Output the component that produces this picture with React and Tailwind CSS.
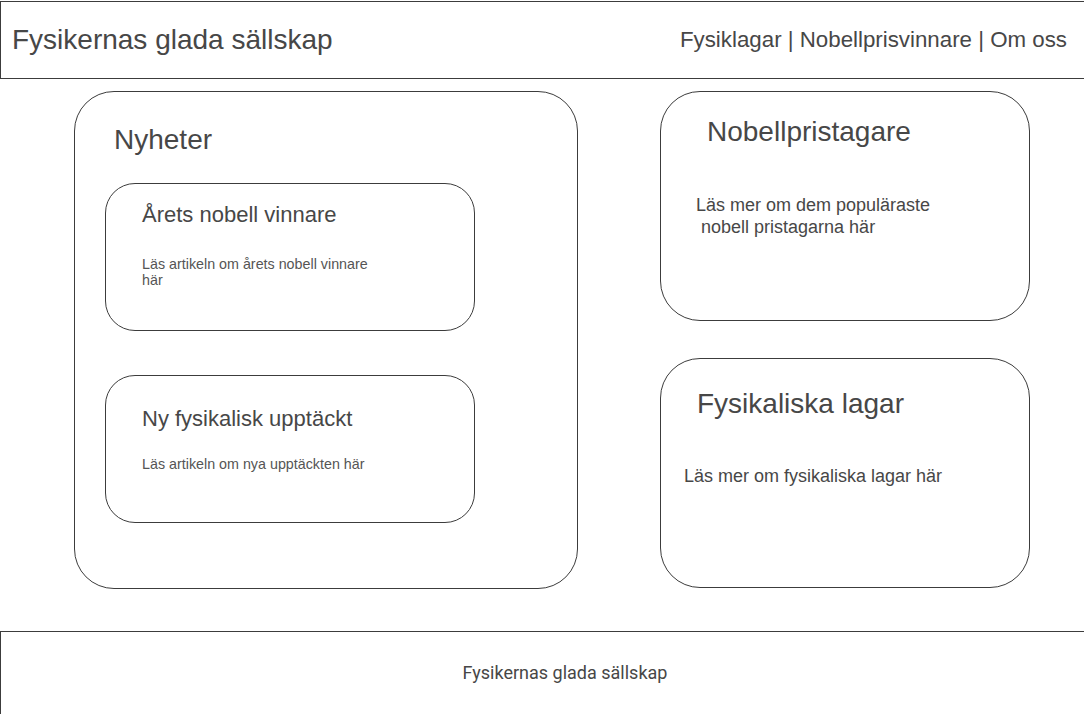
export default function App() {
  return (
    <div className="w-full h-[714px] overflow-hidden bg-white font-['Liberation_Sans'] text-[#474747]">
      {/* Header */}
      <header className="mt-px h-[78px] w-[1130px] border border-[#3c3c3c] flex items-center justify-between pl-[11px] pr-[62px]">
        <h1 className="text-[28px] leading-none">Fysikernas glada sällskap</h1>
        <nav className="text-[22.3px] leading-none">Fysiklagar | Nobellprisvinnare | Om oss</nav>
      </header>

      {/* Main */}
      <main className="h-[552px] flex pt-[12px] pl-[74px] gap-[82px]">
        {/* Nyheter */}
        <section className="w-[504px] h-[498px] rounded-[40px] border border-[#3c3c3c] pl-[30px] pt-[34px]">
          <h2 className="ml-[9px] text-[28px] leading-none">Nyheter</h2>
          <div className="mt-[29px] flex flex-col gap-[44px]">
            <NewsCard pad="pt-[20px]" gap="mt-[30px]" title="Årets nobell vinnare" text="Läs artikeln om årets nobell vinnare här" />
            <NewsCard pad="pt-[32px]" gap="mt-[26px]" title="Ny fysikalisk upptäckt" text="Läs artikeln om nya upptäckten här" />
          </div>
        </section>

        {/* Right column */}
        <div className="flex flex-col gap-[37px]">
          <section className="w-[370px] h-[230px] rounded-[40px] border border-[#3c3c3c] pt-[26px]">
            <h2 className="ml-[46px] text-[28px] leading-none">Nobellpristagare</h2>
            <p className="ml-[35px] mt-[48px] w-[300px] text-[18px] leading-[22px] whitespace-pre-wrap">
              {"Läs mer om dem populäraste\n nobell pristagarna här"}
            </p>
          </section>
          <section className="w-[370px] h-[230px] rounded-[40px] border border-[#3c3c3c] pt-[31px]">
            <h2 className="ml-[36px] text-[28px] leading-none">Fysikaliska lagar</h2>
            <p className="ml-[23px] mt-[47px] text-[18px] leading-[23px]">Läs mer om fysikaliska lagar här</p>
          </section>
        </div>
      </main>

      {/* Footer */}
      <footer className="h-[90px] w-[1130px] border border-[#3c3c3c] flex justify-center pt-[32px]">
        <p className="font-['Roboto'] text-[18px] leading-none">Fysikernas glada sällskap</p>
      </footer>
    </div>
  );
}

function NewsCard({ pad, gap, title, text }) {
  return (
    <div className={`w-[370px] h-[148px] rounded-[30px] border border-[#3c3c3c] pl-[36px] ${pad}`}>
      <h3 className="text-[22px] leading-none">{title}</h3>
      <p className={`${gap} w-[240px] text-[14.3px] leading-[16px] text-[#555]`}>{text}</p>
    </div>
  );
}
